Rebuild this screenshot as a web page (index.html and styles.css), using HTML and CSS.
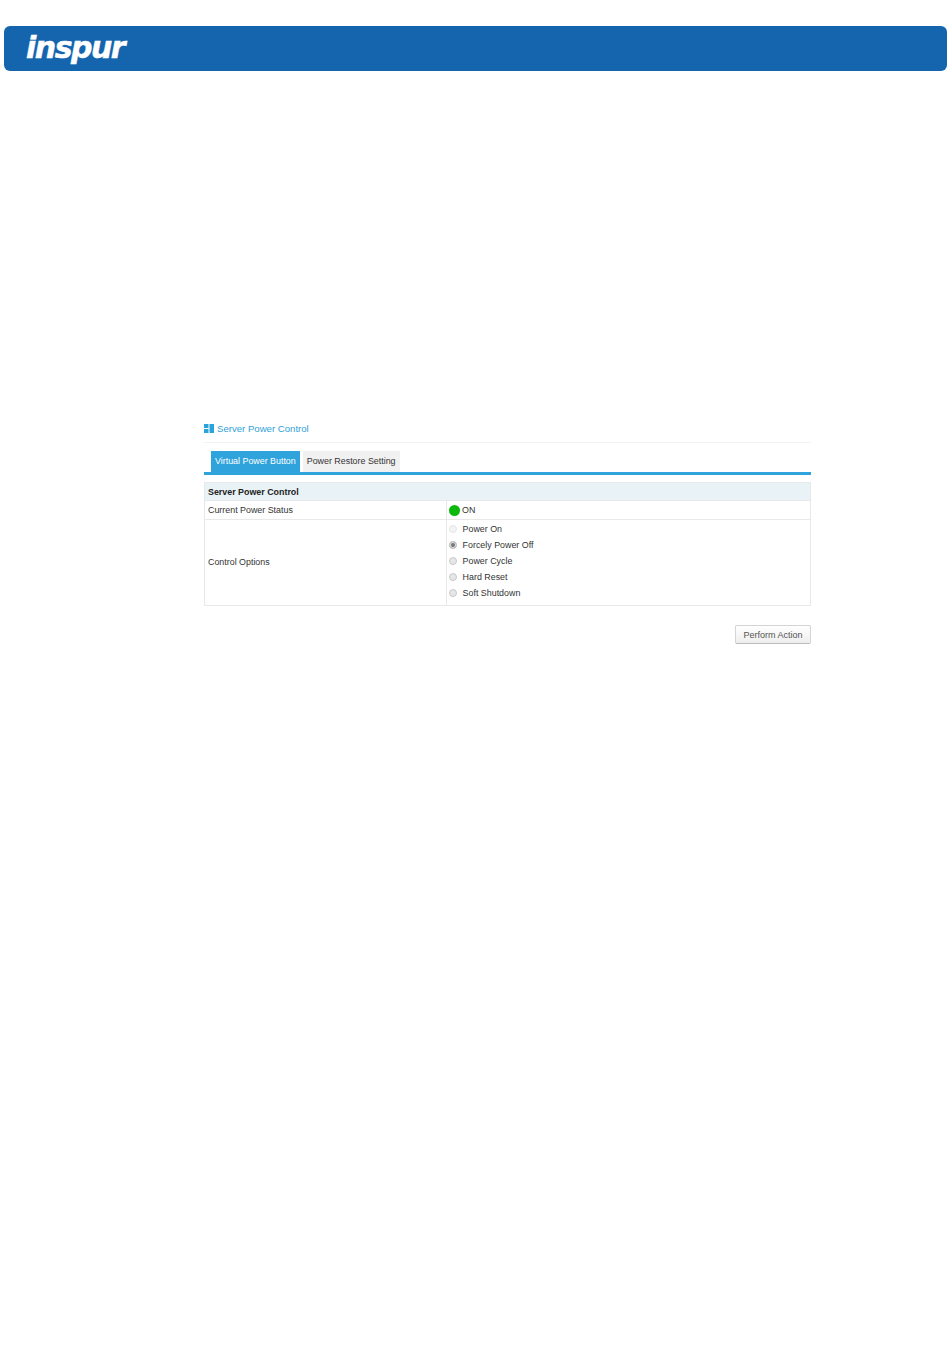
FILE: index.html
```html
<!DOCTYPE html>
<html lang="en">
<head>
    <meta charset="UTF-8">
    <meta name="viewport" content="width=device-width, initial-scale=1.0">
    <title>Server Power Control</title>
    <link rel="stylesheet" href="styles.css">
</head>
<body>
    <header class="banner">
        <span class="logo">inspur</span>
    </header>

    <main class="panel">
        <div class="page-title">
            <svg class="title-icon" width="10" height="9" viewBox="0 0 10 9">
                <rect x="0" y="0" width="4.5" height="4" fill="#2aa3dc"/>
                <rect x="0" y="5" width="4.5" height="4" fill="#2aa3dc"/>
                <rect x="5.5" y="0" width="4.5" height="9" fill="#2aa3dc"/>
            </svg>
            <span>Server Power Control</span>
        </div>

        <div class="tabs">
            <div class="tab active">Virtual Power Button</div>
            <div class="tab">Power Restore Setting</div>
        </div>

        <div class="table">
            <div class="table-head">Server Power Control</div>
            <div class="row">
                <div class="label">Current Power Status</div>
                <div class="value status">
                    <span class="led"></span>
                    <span>ON</span>
                </div>
            </div>
            <div class="row last">
                <div class="label">Control Options</div>
                <div class="value options">
                    <label class="option disabled"><span class="radio"></span>Power On</label>
                    <label class="option"><span class="radio checked"></span>Forcely Power Off</label>
                    <label class="option"><span class="radio"></span>Power Cycle</label>
                    <label class="option"><span class="radio"></span>Hard Reset</label>
                    <label class="option"><span class="radio"></span>Soft Shutdown</label>
                </div>
            </div>
        </div>

        <div class="actions">
            <button class="btn">Perform Action</button>
        </div>
    </main>
</body>
</html>
```

FILE: styles.css
```css
body {
    margin: 0;
    padding-top: 26px;
    height: 1343px;
    overflow: hidden;
    background-color: #ffffff;
    font-family: "Liberation Sans", Arial, sans-serif;
    font-size: 8.9px;
    color: #333333;
}
.banner {
    display: flex;
    align-items: center;
    height: 45px;
    margin: 0 3px 0 4px;
    padding-left: 22px;
    background-color: #1565ae;
    border-radius: 6px;
}
.logo {
    font-family: "DejaVu Sans", sans-serif;
    font-size: 30px;
    font-weight: bold;
    font-style: italic;
    letter-spacing: -1.5px;
    -webkit-text-stroke: 0.5px #ffffff;
    color: #ffffff;
    line-height: 1;
    margin-top: -2px;
}
.panel {
    width: 607px;
    margin: 350px 0 0 204px;
}
.page-title {
    display: flex;
    align-items: center;
    gap: 3px;
    height: 15px;
    padding-bottom: 6px;
    border-bottom: 1px solid #f2f2f2;
    font-size: 9.6px;
    color: #31a2d8;
}
.tabs {
    display: flex;
    gap: 3px;
    margin-top: 8px;
    padding-left: 7px;
    border-bottom: 3px solid #2fa3dc;
}
.tab {
    height: 21px;
    line-height: 21px;
    padding: 0 4px;
    background-color: #f1f1f1;
    color: #333333;
}
.tab.active {
    background-color: #2fa3dc;
    color: #ffffff;
}
.table {
    margin-top: 7px;
    border: 1px solid #e8e8e8;
}
.table-head {
    height: 17px;
    line-height: 19px;
    padding-left: 3px;
    background-color: #e9f2f7;
    border-bottom: 1px solid #e8e8e8;
    font-weight: bold;
    color: #222222;
}
.row {
    display: flex;
    border-bottom: 1px solid #e8e8e8;
}
.row.last {
    border-bottom: none;
}
.label {
    display: flex;
    align-items: center;
    width: 242px;
    padding-left: 3px;
    padding-bottom: 1px;
    box-sizing: border-box;
    border-right: 1px solid #e8e8e8;
}
.value {
    padding-left: 2px;
}
.status {
    display: flex;
    align-items: center;
    gap: 2px;
    height: 18px;
}
.led {
    width: 11px;
    height: 11px;
    border-radius: 50%;
    background-color: #0cb80c;
}
.options {
    display: flex;
    flex-direction: column;
    padding-top: 1px;
    padding-bottom: 4px;
}
.option {
    display: flex;
    align-items: center;
    gap: 5.6px;
    height: 16px;
}
.radio {
    width: 6px;
    height: 6px;
    border: 1px solid #c8c8c8;
    border-radius: 50%;
    background-color: #e6e6e6;
}
.option.disabled .radio {
    background-color: #f4f4f4;
    border-color: #e4e4e4;
}
.radio.checked {
    background-color: #777777;
    box-shadow: inset 0 0 0 1px #e0e0e0;
}
.actions {
    display: flex;
    justify-content: flex-end;
    margin-top: 19px;
}
.btn {
    width: 76px;
    height: 19px;
    padding: 0;
    font-family: inherit;
    font-size: 9px;
    color: #555555;
    background: linear-gradient(#ffffff, #eeeeee);
    border: 1px solid #d4d4d4;
    border-bottom-color: #bbbbbb;
    border-radius: 2px;
}
```
